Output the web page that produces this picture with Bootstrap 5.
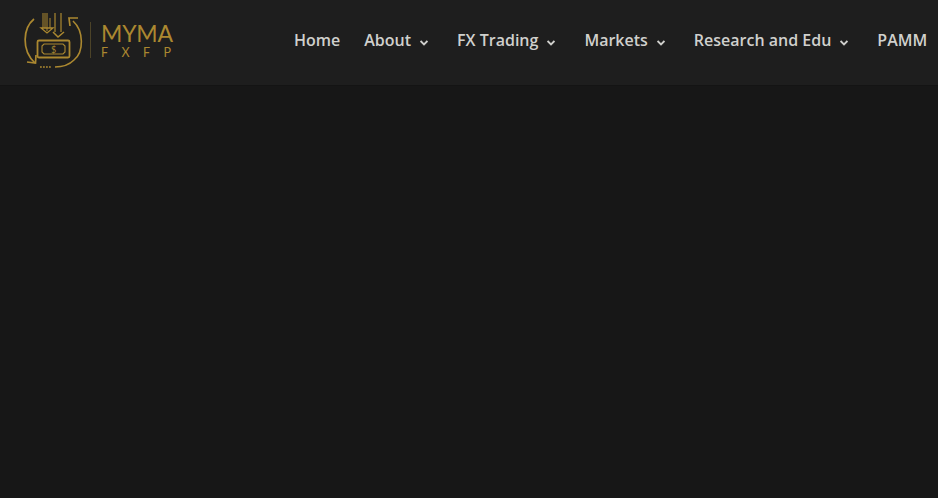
<!DOCTYPE html>
<html lang="en">
<head>
  <meta charset="UTF-8" />
  <meta name="viewport" content="width=device-width, initial-scale=1.0"/>
  <title>MYMA FXFP</title>
  <link href="https://cdn.jsdelivr.net/npm/bootstrap@5.3.0/dist/css/bootstrap.min.css" rel="stylesheet"/>
  <style>
    html, body {
      height: 100%;
      overflow: hidden;
    }
    body {
      background-color: #171717;
      font-family: "Open Sans", sans-serif;
    }
    .site-header {
      height: 85px;
      background-color: #1e1e1e;
      padding-left: 23px;
      box-shadow: 0 1px 0 rgba(0, 0, 0, 0.1);
    }
    .logo-mark {
      width: 62px;
      height: 60px;
      margin-top: 10px;
    }
    .logo-rule {
      width: 1px;
      height: 36px;
      margin: 22px 10px 0 5px;
      background-color: #4c4328;
    }
    .logo-text {
      margin-top: 22px;
      color: #ab8830;
      font-family: Lato, sans-serif;
      line-height: 1;
    }
    .logo-name {
      font-size: 23px;
      letter-spacing: -0.2px;
      line-height: 22px;
    }
    .logo-sub {
      margin-top: 2px;
      font-size: 12.5px;
      letter-spacing: 13.4px;
      line-height: 14px;
    }
    .main-menu {
      position: absolute;
      left: 294px;
      top: 28px;
      gap: 24px;
      white-space: nowrap;
    }
    .main-menu a {
      color: #d0d0cd;
      font-size: 16px;
      font-weight: 600;
      line-height: 24px;
      text-decoration: none;
    }
    .menu-caret {
      width: 8px;
      height: 6px;
      margin-left: 9px;
      margin-right: 5px;
      vertical-align: 0;
    }
  </style>
</head>
<body>
  <header class="site-header d-flex position-relative">
    <svg class="logo-mark" viewBox="0 0 62 60" fill="none" stroke="#ab8830" stroke-width="1.5">
      <!-- circular arrows -->
      <path d="M11 9C0 18-2 40 12 53" stroke-width="1.7"/>
      <path d="M4 52l8.500 1 .5-8" stroke-width="1.7"/>
      <path d="M50 11c11 10 11 31 1 39-5 5-12 7-19 7" stroke-width="1.6"/>
      <path d="M47 16l-1-8 9 0" stroke-width="1.7"/>
      <path d="M17 57h11" stroke-dasharray="1.800 1.200"/>
      <!-- down arrows -->
      <path d="M20 3v15M22 3v15M24 3v18M27 8v10" stroke-width="1"/>
      <path d="M18 18h12l-6 5z" stroke-width="1.300"/>
      <path d="M32 3v19M38 3v19" stroke-width="1.200"/>
      <path d="M30 22l5 5 6-5" stroke-width="1.500"/>
      <!-- banknote -->
      <rect x="14.500" y="30.500" width="32" height="17" rx="1.500" stroke-width="1.800"/>
      <path d="M21 34h19l2 2v6l-2 2H21l-2-2v-6z" stroke-width="1.100"/>
      <text x="30.500" y="42.500" fill="#ab8830" stroke="none" font-family="Lato, sans-serif" font-size="9" text-anchor="middle">$</text>
    </svg>
    <div class="logo-rule"></div>
    <div class="logo-text">
      <div class="logo-name">MYMA</div>
      <div class="logo-sub">FXFP</div>
    </div>
    <nav class="main-menu d-flex">
      <a href="#">Home</a>
      <a href="#">About<svg class="menu-caret" viewBox="0 0 8 6" fill="none" stroke="#d0d0cd" stroke-width="1.800"><path d="M.6 1l3.400 3.400L7.400 1"/></svg></a>
      <a href="#">FX Trading<svg class="menu-caret" viewBox="0 0 8 6" fill="none" stroke="#d0d0cd" stroke-width="1.800"><path d="M.6 1l3.400 3.400L7.400 1"/></svg></a>
      <a href="#">Markets<svg class="menu-caret" viewBox="0 0 8 6" fill="none" stroke="#d0d0cd" stroke-width="1.800"><path d="M.6 1l3.400 3.400L7.400 1"/></svg></a>
      <a href="#">Research and Edu<svg class="menu-caret" viewBox="0 0 8 6" fill="none" stroke="#d0d0cd" stroke-width="1.800"><path d="M.6 1l3.400 3.400L7.400 1"/></svg></a>
      <a href="#">PAMM</a>
    </nav>
  </header>
  <script src="https://cdn.jsdelivr.net/npm/bootstrap@5.3.0/dist/js/bootstrap.bundle.min.js"></script>
</body>
</html>
